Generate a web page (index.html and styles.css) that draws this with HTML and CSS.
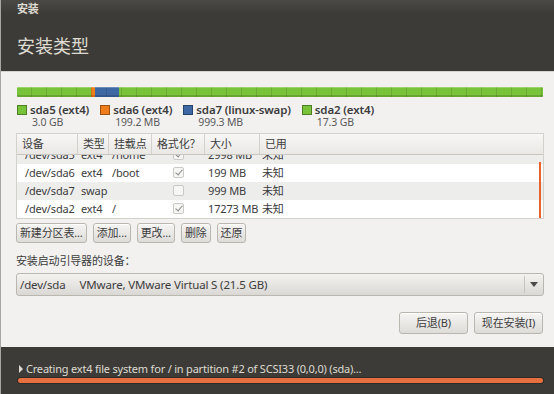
FILE: index.html
```html
<!DOCTYPE html>
<html lang="zh-CN">
<head>
    <meta charset="UTF-8">
    <title>安装</title>
    <link rel="stylesheet" href="styles.css">
</head>
<body>
    <div class="window">
        <div class="header">
            <div class="win-title">安装</div>
            <h1>安装类型</h1>
        </div>
        <div class="content">
            <div class="partbar">
                <span class="seg green" style="width: 74px"></span>
                <span class="seg orange" style="width: 4px"></span>
                <span class="seg blue" style="width: 24px"></span>
                <span class="seg green grow"></span>
            </div>
            <div class="legend">
                <div class="legend-item">
                    <span class="swatch green"></span>
                    <div>
                        <div class="legend-name">sda5 (ext4)</div>
                        <div class="legend-size">3.0 GB</div>
                    </div>
                </div>
                <div class="legend-item">
                    <span class="swatch orange"></span>
                    <div>
                        <div class="legend-name">sda6 (ext4)</div>
                        <div class="legend-size">199.2 MB</div>
                    </div>
                </div>
                <div class="legend-item">
                    <span class="swatch blue"></span>
                    <div>
                        <div class="legend-name">sda7 (linux-swap)</div>
                        <div class="legend-size">999.3 MB</div>
                    </div>
                </div>
                <div class="legend-item">
                    <span class="swatch green"></span>
                    <div>
                        <div class="legend-name">sda2 (ext4)</div>
                        <div class="legend-size">17.3 GB</div>
                    </div>
                </div>
            </div>

            <div class="table">
                <div class="head">
                    <div>设备</div><div>类型</div><div>挂载点</div><div>格式化？</div><div>大小</div><div>已用</div>
                </div>
                <div class="rows">
                    <div class="rows-inner">
                        <div class="row odd">
                            <div>/dev/sda5</div><div>ext4</div><div>/home</div><div><span class="check on"></span></div><div>2998 MB</div><div>未知</div>
                        </div>
                        <div class="row">
                            <div>/dev/sda6</div><div>ext4</div><div>/boot</div><div><span class="check on"></span></div><div>199 MB</div><div>未知</div>
                        </div>
                        <div class="row odd">
                            <div>/dev/sda7</div><div>swap</div><div></div><div><span class="check"></span></div><div>999 MB</div><div>未知</div>
                        </div>
                        <div class="row">
                            <div>/dev/sda2</div><div>ext4</div><div>/</div><div><span class="check on"></span></div><div>17273 MB</div><div>未知</div>
                        </div>
                    </div>
                    <div class="scroll"></div>
                </div>
            </div>

            <div class="tools">
                <button class="btn">新建分区表...</button>
                <button class="btn">添加...</button>
                <button class="btn">更改...</button>
                <button class="btn">删除</button>
                <button class="btn">还原</button>
            </div>

            <div class="label">安装启动引导器的设备：</div>
            <div class="combo">
                <span class="combo-text"><span class="dev">/dev/sda</span>VMware, VMware Virtual S (21.5 GB)</span>
                <span class="combo-arrow"></span>
            </div>

            <div class="actions">
                <button class="btn wide">后退(B)</button>
                <button class="btn wide">现在安装(I)</button>
            </div>
        </div>
        <div class="footer">
            <div class="status"><span class="tri"></span>Creating ext4 file system for / in partition #2 of SCSI33 (0,0,0) (sda)...</div>
            <div class="progress"><div class="progress-fill"></div></div>
        </div>
    </div>
</body>
</html>
```
FILE: styles.css
```css
* {
    box-sizing: border-box;
}
html, body {
    margin: 0;
    padding: 0;
}
body {
    width: 554px;
    height: 394px;
    overflow: hidden;
    font-family: "Noto Sans", "Noto Sans CJK SC", sans-serif;
    font-size: 11px;
    letter-spacing: -0.15px;
    color: #3c3c3c;
    background-color: #f2f1f0;
}
.window {
    height: 394px;
    display: flex;
    flex-direction: column;
    border-left: 1px solid #a8a6a2;
}
.header {
    height: 72px;
    background-image: linear-gradient(#4a4945, #3c3b37 14px);
    color: #dfdbd2;
    padding: 0 0 0 16px;
    border-bottom: 1px solid #d6d4cf;
}
.win-title {
    font-size: 11px;
    font-weight: bold;
    line-height: 18px;
}
h1 {
    margin: 17px 0 0;
    font-size: 18px;
    font-weight: normal;
    line-height: 22px;
    letter-spacing: 0;
}
.content {
    flex: 1;
    padding: 15px 11px 0 15px;
}
.partbar {
    display: flex;
    height: 10px;
    margin-left: 1px;
    border-radius: 1px;
    overflow: hidden;
    position: relative;
}
.partbar::after {
    content: "";
    position: absolute;
    inset: 0;
    background-image: repeating-linear-gradient(90deg, transparent 0, transparent 14px, rgba(0, 0, 0, 0.12) 14px, rgba(0, 0, 0, 0.12) 15px);
    box-shadow: inset 0 -2px 0 rgba(0, 0, 0, 0.15), inset 0 1px 0 rgba(255, 255, 255, 0.25);
}
.seg.grow {
    flex: 1;
}
.green {
    background-color: #79c33a;
}
.orange {
    background-color: #f07d1b;
}
.blue {
    background-color: #3d68a4;
}
.legend {
    display: flex;
    gap: 11px;
    margin: 6px 0 0 1px;
}
.legend-item {
    display: flex;
    align-items: flex-start;
}
.swatch {
    width: 10px;
    height: 10px;
    margin: 2px 3px 0 0;
    border: 1px solid rgba(0, 0, 0, 0.35);
}
.legend-name {
    font-weight: 600;
    font-size: 11.5px;
    line-height: 13px;
    color: #3c3c3c;
}
.legend-size {
    font-size: 10.5px;
    line-height: 13px;
    color: #5a5a5a;
    padding-left: 2px;
}
.table {
    margin-top: 4px;
    width: 528px;
    border: 1px solid #d3d1cc;
    background-color: #ffffff;
}
.head,
.row {
    display: grid;
    grid-template-columns: 61px 31px 43px 53px 55px 1fr;
    white-space: nowrap;
}
.head {
    height: 21px;
    line-height: 20px;
    background-image: linear-gradient(#f8f7f6, #e9e8e5);
    border-bottom: 1px solid #c9c7c2;
}
.head > div {
    border-right: 1px solid #d3d1cc;
    padding-left: 5px;
}
.head > div:last-child {
    border-right: none;
}
.row {
    height: 18px;
    line-height: 18px;
}
.row > div {
    padding-left: 3px;
    overflow: hidden;
}
.row > div:first-child {
    padding-left: 8px;
}
.row > div:nth-child(4) {
    padding-left: 21px;
}
.row > div:nth-child(6) {
    padding-left: 2px;
}
.row.odd {
    background-color: #ededec;
}
.rows {
    height: 63px;
    overflow: hidden;
    position: relative;
}
.rows-inner {
    margin-top: -9px;
}
.check {
    display: inline-block;
    width: 11px;
    height: 11px;
    vertical-align: -1px;
    border: 1px solid #cbc9c5;
    border-radius: 2px;
    background-color: #f6f6f5;
    position: relative;
}
.check.on::after {
    content: "";
    position: absolute;
    left: 3px;
    top: 0;
    width: 3px;
    height: 6px;
    border-right: 1.5px solid #8a8a8a;
    border-bottom: 1.5px solid #8a8a8a;
    transform: rotate(40deg);
}
.scroll {
    position: absolute;
    right: 2px;
    top: 7px;
    bottom: 0;
    width: 2px;
    background-color: #e8632c;
}
.tools {
    display: flex;
    gap: 6px;
    margin-top: 4px;
}
.btn {
    font-family: "Noto Sans", "Noto Sans CJK SC", sans-serif;
    font-size: 11px;
    letter-spacing: -0.15px;
    color: #3c3c3c;
    height: 20px;
    padding: 0 3px;
    line-height: 18px;
    white-space: nowrap;
    border: 1px solid #bab7b1;
    border-radius: 3px;
    background-image: linear-gradient(#f6f5f4, #dedcd8);
    box-shadow: inset 0 1px 0 #ffffff;
}
.label {
    margin-top: 11px;
    line-height: 14px;
}
.combo {
    margin-top: 5px;
    width: 528px;
    height: 23px;
    border: 1px solid #bab7b1;
    border-radius: 3px;
    background-image: linear-gradient(#f4f3f1, #dad8d4);
    display: flex;
    align-items: center;
}
.combo-text {
    flex: 1;
    padding-left: 3px;
    font-size: 11.5px;
}
.dev {
    margin-right: 14px;
}
.combo-arrow {
    width: 19px;
    height: 17px;
    border-left: 1px solid #c7c4bf;
    position: relative;
}
.combo-arrow::after {
    content: "";
    position: absolute;
    left: 5px;
    top: 6px;
    border-left: 4px solid transparent;
    border-right: 4px solid transparent;
    border-top: 5px solid #4a4a4a;
}
.actions {
    display: flex;
    justify-content: flex-end;
    gap: 6px;
    margin-top: 16px;
}
.btn.wide {
    width: 69px;
    height: 22px;
    line-height: 20px;
}
.footer {
    height: 47px;
    background-color: #3c3b37;
    padding: 14px 10px 0 16px;
    color: #dfdbd2;
}
.status {
    font-size: 11px;
    letter-spacing: -0.2px;
    line-height: 16px;
    white-space: nowrap;
}
.tri {
    display: inline-block;
    border-top: 4px solid transparent;
    border-bottom: 4px solid transparent;
    border-left: 4px solid #dfdbd2;
    margin: 0 3px 0 2px;
}
.progress {
    width: 527px;
    height: 7px;
    border-radius: 4px;
    background-color: #2c2b28;
    padding: 1px;
}
.progress-fill {
    height: 5px;
    border-radius: 3px;
    background-color: #e8703f;
}
```
